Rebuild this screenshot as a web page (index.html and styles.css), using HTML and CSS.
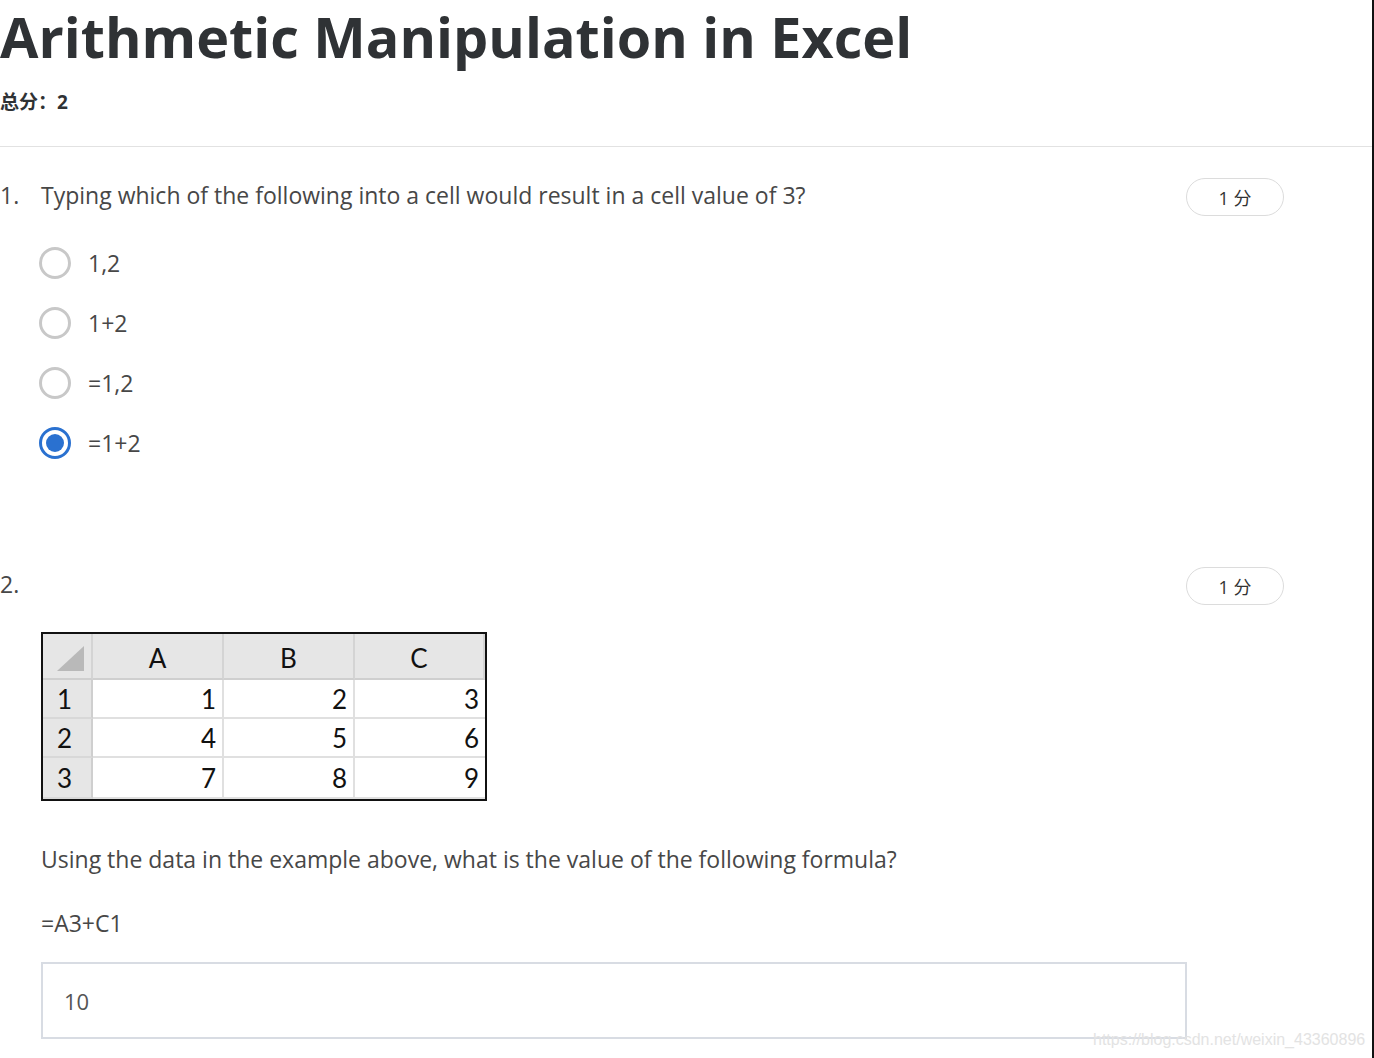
FILE: index.html
```html
<!DOCTYPE html>
<html>
<head>
<meta charset="utf-8">
<link rel="stylesheet" href="styles.css">
</head>
<body>
<div class="page">
  <header class="head">
    <h1 class="title">Arithmetic Manipulation in Excel</h1>
    <div class="total">总分：2</div>
  </header>
  <section class="q q1">
    <div class="qrow">
      <div class="qtext"><span class="num">1.</span><span>Typing which of the following into a cell would result in a cell value of 3?</span></div>
      <div class="badge">1 分</div>
    </div>
    <ul class="opts">
      <li class="opt"><span class="radio"></span><span>1,2</span></li>
      <li class="opt"><span class="radio"></span><span>1+2</span></li>
      <li class="opt"><span class="radio"></span><span>=1,2</span></li>
      <li class="opt"><span class="radio on"></span><span>=1+2</span></li>
    </ul>
  </section>
  <section class="q q2">
    <div class="qrow">
      <div class="qtext"><span class="num">2.</span></div>
      <div class="badge">1 分</div>
    </div>
    <div class="sheet">
      <div class="corner"><svg width="28" height="26" viewBox="0 0 28 26"><polygon points="27,0 27,25 0,25" fill="#b9b9b9"/></svg></div>
      <div class="ch">A</div><div class="ch">B</div><div class="ch">C</div>
      <div class="rh">1</div><div class="cell">1</div><div class="cell">2</div><div class="cell">3</div>
      <div class="rh">2</div><div class="cell">4</div><div class="cell">5</div><div class="cell">6</div>
      <div class="rh">3</div><div class="cell">7</div><div class="cell">8</div><div class="cell">9</div>
    </div>
    <p class="para">Using the data in the example above, what is the value of the following formula?</p>
    <p class="formula">=A3+C1</p>
    <div class="answer">10</div>
  </section>
  <div class="watermark">https://blog.csdn.net/weixin_43360896</div>
</div>
</body>
</html>
```
FILE: styles.css
```css
html, body { margin: 0; padding: 0; background: #fff; }
body { font-family: "Open Sans", "Noto Sans CJK SC", sans-serif; color: #333; }
.page { position: relative; width: 1372px; height: 1058px; border-right: 2px solid #111; overflow: hidden; }
.head { border-bottom: 1px solid #e2e2e2; height: 146px; }
.title { margin: 0; font-size: 55.7px; font-weight: 700; color: #2f3235; line-height: 72px; }
.total { margin-top: 14px; font-size: 19px; font-weight: 700; color: #2f3235; line-height: 32px; }
.q { padding-right: 88px; }
.qrow { display: flex; justify-content: space-between; align-items: flex-start; }
.q1 .qrow { padding-top: 30px; }
.qtext { font-size: 23px; color: #474747; line-height: 36px; display: flex; }
.num { width: 41px; }
.badge { width: 98px; height: 38px; border: 1px solid #dcdcdc; border-radius: 19px; box-sizing: border-box; font-size: 18px; color: #333; display: flex; align-items: center; justify-content: center; margin-top: 1px; }
.opts { list-style: none; margin: 0; padding: 30px 0 0 39px; display: flex; flex-direction: column; gap: 26px; }
.opt { display: flex; align-items: center; gap: 17px; font-size: 23px; color: #474747; height: 34px; }
.radio { width: 32px; height: 32px; box-sizing: border-box; border: 3px solid #c8c8c8; border-radius: 50%; display: flex; align-items: center; justify-content: center; }
.radio.on { border-color: #2a71d0; }
.radio.on::after { content: ""; width: 18px; height: 18px; border-radius: 50%; background: #2a71d0; }
.q2 .qrow { padding-top: 106px; }
.sheet { margin: 27px 0 0 41px; width: 446px; box-sizing: border-box; border: 2px solid #111; display: grid; grid-template-columns: 50px 131px 131px 1fr; grid-template-rows: 46px 39px 39px 41px; font-family: "Lato", "Liberation Sans", sans-serif; font-size: 26px; color: #111; background: #fff; }
.corner, .ch, .rh { background: #e6e6e6; }
.corner { display: flex; align-items: flex-end; justify-content: flex-end; padding: 0 6px 6px 0; border-right: 2px solid #d4d4d4; border-bottom: 2px solid #cfcfcf; }
.ch { display: flex; align-items: center; justify-content: center; border-right: 2px solid #d4d4d4; border-bottom: 2px solid #cfcfcf; padding-top: 4px; }
.rh { display: flex; align-items: center; padding-left: 14px; border-right: 2px solid #cfcfcf; border-bottom: 2px solid #d8d8d8; }
.cell { display: flex; align-items: center; justify-content: flex-end; padding-right: 6px; border-right: 2px solid #e0e0e0; border-bottom: 2px solid #e0e0e0; }
.cell:nth-child(4n) { border-right: none; }
.para { margin: 40px 0 0 41px; font-size: 23px; color: #474747; line-height: 36px; }
.formula { margin: 28px 0 0 41px; font-size: 23px; color: #474747; line-height: 36px; }
.answer { margin: 21px 0 0 41px; width: 1146px; height: 77px; box-sizing: border-box; border: 2px solid #d8dce3; padding-left: 21px; display: flex; align-items: center; font-size: 22px; color: #555; }
.watermark { position: absolute; left: 1093px; top: 1031px; font-family: "Liberation Sans", Arial, sans-serif; font-size: 16px; color: #e3e3e3; }
```
